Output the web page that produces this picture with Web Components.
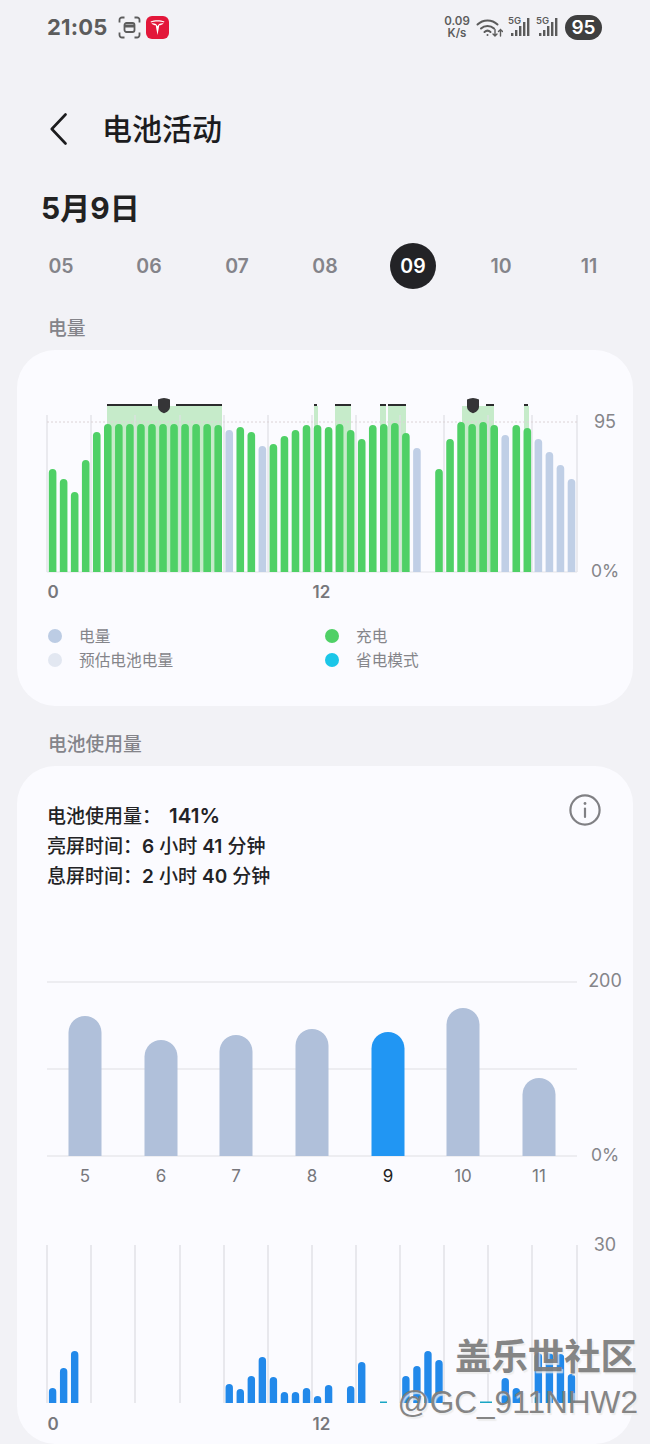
<!DOCTYPE html>
<html lang="zh">
<head>
<meta charset="utf-8">
<title>电池活动</title>
<style>
    html, body { margin: 0; padding: 0; }
    body {
        width: 650px;
        height: 1444px;
        overflow: hidden;
        position: relative;
        background: #f2f2f6;
        font-family: Inter, "Noto Sans CJK SC", sans-serif;
    }
</style>
</head>
<body>
<status-bar></status-bar>
<app-header title="电池活动"></app-header>
<date-strip heading="5月9日" days="05,06,07,08,09,10,11" active="09"></date-strip>

<section-label style="--top: 27px;">电量</section-label>
<round-card>
    <battery-chart></battery-chart>
    <chart-legend></chart-legend>
</round-card>

<section-label style="--top: 26px;">电池使用量</section-label>
<round-card style="--card-height: 678px;">
    <usage-summary></usage-summary>
    <weekly-chart></weekly-chart>
    <hourly-chart></hourly-chart>
</round-card>
<water-mark></water-mark>

<script>
const CJK = 'Inter, "Noto Sans CJK SC", sans-serif';
const GRID_X = [47, 91, 135, 180, 224, 268, 312, 356, 400, 444, 488, 532, 577];

function slotX(i) {
    return 52.6 + 11.04 * i;
}

// bar with a round top and a flat foot
function barPath(cx, w, top, bottom, r) {
    const l = cx - w / 2, rt = cx + w / 2;
    return `M${l} ${bottom}V${top + r}A${r} ${r} 0 0 1 ${rt} ${top + r}V${bottom}Z`;
}

class StatusBar extends HTMLElement {
    constructor() {
        super();
        this.attachShadow({ mode: 'open' });
    }

    signal() {
        return `
            <div class="sig">
                <span>5G</span>
                <svg width="22" height="20" viewBox="0 0 22 20">
                    <g fill="#5a5a5a">
                        <rect x="3" y="16" width="2.4" height="3"/>
                        <rect x="7" y="13" width="2.4" height="6"/>
                        <rect x="11" y="9" width="2.4" height="10"/>
                        <rect x="15" y="5" width="2.4" height="14"/>
                        <rect x="19" y="1" width="2.4" height="18"/>
                    </g>
                </svg>
            </div>`;
    }

    connectedCallback() {
        this.shadowRoot.innerHTML = `
            <style>
                :host {
                    display: flex;
                    align-items: center;
                    justify-content: space-between;
                    height: 54px;
                    padding: 0 48px 0 47px;
                    box-sizing: border-box;
                    font-family: ${CJK};
                    color: #5c5c5c;
                }
                .left, .right { display: flex; align-items: center; }
                .time { font-size: 22px; font-weight: 700; letter-spacing: 0.2px; width: 71px; }
                .tesla { margin-left: 5px; }
                .speed { font-size: 11.5px; font-weight: 600; line-height: 12px; text-align: center; width: 26px; }
                .wifi { margin-left: 6px; }
                .sig { position: relative; width: 22px; height: 20px; margin-left: 5px; }
                .sig + .sig { margin-left: 6px; }
                .sig svg { display: block; }
                .sig span { position: absolute; left: 0; top: -2px; font-size: 9.5px; font-weight: 600; line-height: 11px; }
                .pill {
                    margin-left: 7px;
                    width: 37px;
                    height: 25px;
                    border-radius: 13px;
                    background: #3f3f3f;
                    color: #fff;
                    font-size: 19px;
                    font-weight: 600;
                    line-height: 25px;
                    text-align: center;
                }
            </style>
            <div class="left">
                <span class="time">21:05</span>
                <svg width="23" height="23" viewBox="0 0 23 23" fill="none" stroke="#5c5c5c" stroke-width="1.8">
                    <path d="M1.5 6.5V4a2.5 2.5 0 0 1 2.5-2.5H6.5M16.5 1.5H19A2.5 2.5 0 0 1 21.5 4V6.5M21.5 16.5V19A2.5 2.5 0 0 1 19 21.5H16.5M6.5 21.5H4A2.5 2.5 0 0 1 1.5 19V16.5"/>
                    <rect x="6.5" y="7" width="10" height="9" rx="2"/>
                    <path d="M6.5 10h10" stroke-width="3"/>
                </svg>
                <svg class="tesla" width="23" height="23" viewBox="0 0 23 23">
                    <rect width="23" height="23" rx="6" fill="#e3173a"/>
                    <path d="M4.6 5.4C8.6 3.7 14.4 3.7 18.4 5.4L18 6.4C14.4 5.1 8.6 5.1 5 6.4Z" fill="#fff"/>
                    <path d="M5.4 7.2C7.4 7.2 9.2 7.5 10.2 8.3C10.7 8.9 11.1 9.6 11.5 10.2C11.9 9.6 12.3 8.9 12.8 8.3C13.8 7.5 15.6 7.2 17.6 7.2C16.4 8.6 14.8 9.2 13.3 9.3L11.5 19L9.7 9.3C8.2 9.2 6.6 8.6 5.4 7.2Z" fill="#fff"/>
                </svg>
            </div>
            <div class="right">
                <div class="speed">0.09<br>K/s</div>
                <svg class="wifi" width="27" height="21" viewBox="0 0 27 21" fill="none" stroke="#5c5c5c" stroke-width="2" stroke-linecap="round">
                    <path d="M1.5 7.5C7 2 16 2 21.5 7.5"/>
                    <path d="M5 11.5C8.5 8 14.5 8 18 11.5"/>
                    <path d="M8.5 15C10.3 13.4 12.7 13.4 14.5 15"/>
                    <circle cx="11.5" cy="18" r="1" fill="#5c5c5c" stroke="none"/>
                    <path d="M19 12.5V19M17 17l2 2 2-2" stroke-width="1.4"/>
                    <path d="M24.5 19V12.5M22.5 14.5l2-2 2 2" stroke-width="1.4"/>
                </svg>
                ${this.signal()}
                ${this.signal()}
                <div class="pill">95</div>
            </div>
        `;
    }
}

class AppHeader extends HTMLElement {
    constructor() {
        super();
        this.attachShadow({ mode: 'open' });
    }

    connectedCallback() {
        this.shadowRoot.innerHTML = `
            <style>
                :host {
                    display: flex;
                    align-items: center;
                    height: 40px;
                    margin-top: 55px;
                    padding-left: 50px;
                    font-family: ${CJK};
                }
                svg { display: block; }
                h1 {
                    margin: 0 0 0 35px;
                    font-size: 30px;
                    font-weight: 500;
                    line-height: 40px;
                    color: #1c1c1e;
                }
            </style>
            <svg width="17" height="32" viewBox="0 0 17 32" fill="none" stroke="#1c1c1e" stroke-width="2.6" stroke-linecap="round" stroke-linejoin="round">
                <path d="M15.5 1.5L1.8 16L15.5 30.5"/>
            </svg>
            <h1>${this.getAttribute('title')}</h1>
        `;
    }
}

class DateStrip extends HTMLElement {
    constructor() {
        super();
        this.attachShadow({ mode: 'open' });
    }

    connectedCallback() {
        const days = this.getAttribute('days').split(',');
        const active = this.getAttribute('active');
        this.shadowRoot.innerHTML = `
            <style>
                :host {
                    display: block;
                    font-family: ${CJK};
                    margin-top: 41px;
                }
                h2 {
                    margin: 0 0 0 41px;
                    font-size: 30px;
                    font-weight: 700;
                    line-height: 36px;
                    color: #222;
                }
                .days {
                    display: grid;
                    grid-template-columns: repeat(7, 88px);
                    padding-left: 17px;
                    margin-top: 17px;
                    height: 46px;
                }
                .day {
                    justify-self: center;
                    width: 46px;
                    height: 46px;
                    border-radius: 50%;
                    font-size: 19.5px;
                    font-weight: 600;
                    line-height: 46px;
                    text-align: center;
                    color: #84848a;
                }
                .day.on { background: #232326; color: #fff; }
            </style>
            <h2>${this.getAttribute('heading')}</h2>
            <div class="days">
                ${days.map(d => `<div class="day ${d === active ? 'on' : ''}">${d}</div>`).join('')}
            </div>
        `;
    }
}

class SectionLabel extends HTMLElement {
    constructor() {
        super();
        this.attachShadow({ mode: 'open' });
        this.shadowRoot.innerHTML = `
            <style>
                :host {
                    display: block;
                    height: 26px;
                    margin-top: var(--top, 26px);
                    margin-bottom: 8px;
                    padding-left: 48px;
                    font-family: ${CJK};
                    font-size: 18.8px;
                    font-weight: 500;
                    line-height: 26px;
                    color: #84848a;
                }
            </style>
            <slot></slot>
        `;
    }
}

class RoundCard extends HTMLElement {
    constructor() {
        super();
        this.attachShadow({ mode: 'open' });
        this.shadowRoot.innerHTML = `
            <style>
                :host {
                    display: flex;
                    flex-direction: column;
                    width: 616px;
                    height: var(--card-height, 356px);
                    margin-left: 17px;
                    border-radius: 38px;
                    background: #fbfbff;
                    overflow: hidden;
                }
            </style>
            <slot></slot>
        `;
    }
}

class BatteryChart extends HTMLElement {
    constructor() {
        super();
        this.attachShadow({ mode: 'open' });
    }

    connectedCallback() {
        const base = 572;
        // top of each half hour bar, g = charging, b = plain, null = no data
        const bars = [
            [469, 'g'], [479, 'g'], [492, 'g'], [460, 'g'], [432, 'g'],
            [424, 'g'], [424, 'g'], [424, 'g'], [424, 'g'], [424, 'g'],
            [424, 'g'], [424, 'g'], [424, 'g'], [424, 'g'], [424, 'g'],
            [425, 'g'], [430, 'b'], [427, 'g'], [432, 'g'], [446, 'b'],
            [444, 'g'], [436, 'g'], [430, 'g'], [425, 'g'], [425, 'g'],
            [427, 'g'], [424, 'g'], [430, 'g'], [439, 'g'], [425, 'g'],
            [424, 'g'], [423, 'g'], [433, 'g'], [448, 'b'], null,
            [469, 'g'], [439, 'g'], [422, 'g'], [424, 'g'], [422, 'g'],
            [425, 'g'], [435, 'b'], [425, 'g'], [428, 'g'], [439, 'b'],
            [452, 'b'], [465, 'b'], [479, 'b']
        ];
        const shades = [[107, 222], [314, 318], [335, 351], [380, 386], [388, 406], [462, 494], [524, 529]];
        const marks = [[107, 152], [176, 222], [314, 317], [335, 351], [380, 386], [388, 406], [486, 494], [524, 528]];
        const shield = 'M0 -7.5C2 -7.5 4 -7 6 -6V1C6 4.5 3 6.8 0 7.8C-3 6.8 -6 4.5 -6 1V-6C-4 -7 -2 -7.5 0 -7.5Z';

        this.shadowRoot.innerHTML = `
            <style>
                :host { display: block; height: 210px; margin-top: 45px; }
                svg { display: block; }
                text { font-family: ${CJK}; }
            </style>
            <svg width="616" height="210" viewBox="17 395 616 210">
                ${shades.map(([a, b]) => `<rect x="${a}" y="406" width="${b - a}" height="${base - 406}" fill="#c6ebca"/>`).join('')}
                ${GRID_X.map(x => `<line x1="${x}" x2="${x}" y1="415" y2="${base}" stroke="#dfdfe4" stroke-width="1.2"/>`).join('')}
                <line x1="47" x2="577" y1="422" y2="422" stroke="#dcd3d6" stroke-width="1" stroke-dasharray="2 2"/>
                <line x1="47" x2="577" y1="572" y2="572" stroke="#e3e3e8" stroke-width="1"/>
                ${bars.map((b, i) => b ? `<path d="${barPath(slotX(i), 7.6, b[0], base, 3.8)}" fill="${b[1] === 'g' ? '#4fd066' : '#c0cfe6'}"/>` : '').join('')}
                ${marks.map(([a, b]) => `<rect x="${a}" y="404" width="${b - a}" height="2" fill="#2b2b2d"/>`).join('')}
                <path d="${shield}" transform="translate(164 405.5)" fill="#353537"/>
                <path d="${shield}" transform="translate(473 405.5)" fill="#353537"/>
                <text x="605" y="427.5" text-anchor="middle" font-size="18" fill="#85858a">95</text>
                <text x="605" y="577" text-anchor="middle" font-size="17.5" fill="#85858a">0%</text>
                <text x="53" y="598" text-anchor="middle" font-size="17" font-weight="600" fill="#77777c">0</text>
                <text x="321.5" y="598" text-anchor="middle" font-size="17" font-weight="600" fill="#77777c">12</text>
            </svg>
        `;
    }
}

class ChartLegend extends HTMLElement {
    constructor() {
        super();
        this.attachShadow({ mode: 'open' });
    }

    connectedCallback() {
        const items = [
            ['电量', '#bccce4'], ['充电', '#4fd066'],
            ['预估电池电量', '#e2e7f1'], ['省电模式', '#1bc6e8']
        ];
        this.shadowRoot.innerHTML = `
            <style>
                :host {
                    display: grid;
                    grid-template-columns: 277px 1fr;
                    grid-auto-rows: 24px;
                    margin-top: 19px;
                    padding-left: 31px;
                    font-family: ${CJK};
                    font-size: 15.7px;
                    color: #85858a;
                }
                .item { display: flex; align-items: center; }
                span { margin-top: -2px; }
                i { width: 14px; height: 14px; border-radius: 50%; margin-right: 17px; }
            </style>
            ${items.map(([t, c]) => `<div class="item"><i style="background:${c}"></i><span>${t}</span></div>`).join('')}
        `;
    }
}

class UsageSummary extends HTMLElement {
    constructor() {
        super();
        this.attachShadow({ mode: 'open' });
    }

    connectedCallback() {
        this.shadowRoot.innerHTML = `
            <style>
                :host {
                    display: flex;
                    justify-content: space-between;
                    align-items: flex-start;
                    height: 97px;
                    padding: 28px 32px 0 30px;
                    font-family: ${CJK};
                    font-size: 19px;
                    font-weight: 500;
                    line-height: 29.8px;
                    color: #232326;
                }
                .lines { margin-top: 7px; }
                b { font-weight: 600; }
                .pct { font-size: 20.5px; margin-left: 3px; }
                svg { display: block; }
            </style>
            <div class="lines">
                <div>电池使用量： <b class="pct">141%</b></div>
                <div>亮屏时间：<b>6</b> 小时 <b>41</b> 分钟</div>
                <div>息屏时间：<b>2</b> 小时 <b>40</b> 分钟</div>
            </div>
            <svg width="32" height="32" viewBox="0 0 32 32" fill="none" stroke="#808084" stroke-width="2.2" stroke-linecap="round">
                <circle cx="16" cy="16" r="14.6"/>
                <path d="M16 14.5V23"/>
                <circle cx="16" cy="9.5" r="1.4" fill="#808084" stroke="none"/>
            </svg>
        `;
    }
}

class WeeklyChart extends HTMLElement {
    constructor() {
        super();
        this.attachShadow({ mode: 'open' });
    }

    connectedCallback() {
        const base = 1156;
        const bars = [
            ['5', 85, 1016], ['6', 161, 1040], ['7', 236, 1035], ['8', 312, 1029],
            ['9', 388, 1032], ['10', 463, 1008], ['11', 539, 1078]
        ];
        this.shadowRoot.innerHTML = `
            <style>
                :host { display: block; height: 230px; margin-top: 69px; }
                svg { display: block; }
                text { font-family: ${CJK}; }
            </style>
            <svg width="616" height="230" viewBox="17 960 616 230">
                ${[982, 1069, 1156].map(y => `<line x1="47" x2="577" y1="${y}" y2="${y}" stroke="#dfdfe4" stroke-width="1.2"/>`).join('')}
                ${bars.map(([n, x, top]) => `<path d="${barPath(x, 33, top, base, 16.5)}" fill="${n === '9' ? '#2196f3' : '#b0c0da'}"/>`).join('')}
                ${bars.map(([n, x]) => `<text x="${x}" y="1182" text-anchor="middle" font-size="17" fill="${n === '9' ? '#222' : '#77777c'}">${n}</text>`).join('')}
                <text x="605" y="987" text-anchor="middle" font-size="18" fill="#85858a">200</text>
                <text x="605" y="1161" text-anchor="middle" font-size="17.5" fill="#85858a">0%</text>
            </svg>
        `;
    }
}

class HourlyChart extends HTMLElement {
    constructor() {
        super();
        this.attachShadow({ mode: 'open' });
    }

    connectedCallback() {
        const base = 1403;
        const bars = {
            0: 1388, 1: 1368, 2: 1351,
            16: 1384, 17: 1389, 18: 1376, 19: 1357, 20: 1377, 21: 1392, 22: 1392, 23: 1388, 24: 1396, 25: 1385,
            27: 1386, 28: 1362,
            32: 1376, 33: 1366, 34: 1351, 35: 1360,
            41: 1378, 42: 1388,
            44: 1353, 45: 1353, 46: 1354, 47: 1374
        };
        this.shadowRoot.innerHTML = `
            <style>
                :host { display: block; height: 209px; margin-top: 45px; }
                svg { display: block; }
                text { font-family: ${CJK}; }
            </style>
            <svg width="616" height="209" viewBox="17 1235 616 209">
                ${GRID_X.map(x => `<line x1="${x}" x2="${x}" y1="1245" y2="${base}" stroke="#e2e2e7" stroke-width="1.5"/>`).join('')}
                ${Object.entries(bars).map(([i, top]) => `<path d="${barPath(slotX(+i), 7.4, top, base, 3.7)}" fill="#2289ea"/>`).join('')}
                <rect x="380" y="1401.5" width="7" height="1.5" fill="#19a6c4"/>
                <rect x="480" y="1401.5" width="12" height="1.5" fill="#19a6c4"/>
                <text x="605" y="1251" text-anchor="middle" font-size="18" fill="#85858a">30</text>
                <text x="53" y="1430" text-anchor="middle" font-size="17" font-weight="600" fill="#77777c">0</text>
                <text x="321.5" y="1430" text-anchor="middle" font-size="17" font-weight="600" fill="#77777c">12</text>
            </svg>
        `;
    }
}

class WaterMark extends HTMLElement {
    constructor() {
        super();
        this.attachShadow({ mode: 'open' });
        this.shadowRoot.innerHTML = `
            <style>
                :host {
                    position: absolute;
                    right: 12px;
                    top: 1330px;
                    display: flex;
                    flex-direction: column;
                    align-items: flex-end;
                    color: #7f7f7f;
                    text-shadow: 1.5px 1.5px 1px rgba(235, 235, 235, .85);
                    opacity: .95;
                }
                .a { font-family: "Noto Sans CJK SC", sans-serif; font-size: 36.4px; font-weight: 700; line-height: 48px; margin-right: 1px; }
                .b { font-family: "Liberation Sans", sans-serif; font-size: 31.6px; line-height: 48px; }
            </style>
            <div class="a">盖乐世社区</div>
            <div class="b">@GC_911NHW2</div>
        `;
    }
}

customElements.define('status-bar', StatusBar);
customElements.define('app-header', AppHeader);
customElements.define('date-strip', DateStrip);
customElements.define('section-label', SectionLabel);
customElements.define('round-card', RoundCard);
customElements.define('battery-chart', BatteryChart);
customElements.define('chart-legend', ChartLegend);
customElements.define('usage-summary', UsageSummary);
customElements.define('weekly-chart', WeeklyChart);
customElements.define('hourly-chart', HourlyChart);
customElements.define('water-mark', WaterMark);
</script>
</body>
</html>
